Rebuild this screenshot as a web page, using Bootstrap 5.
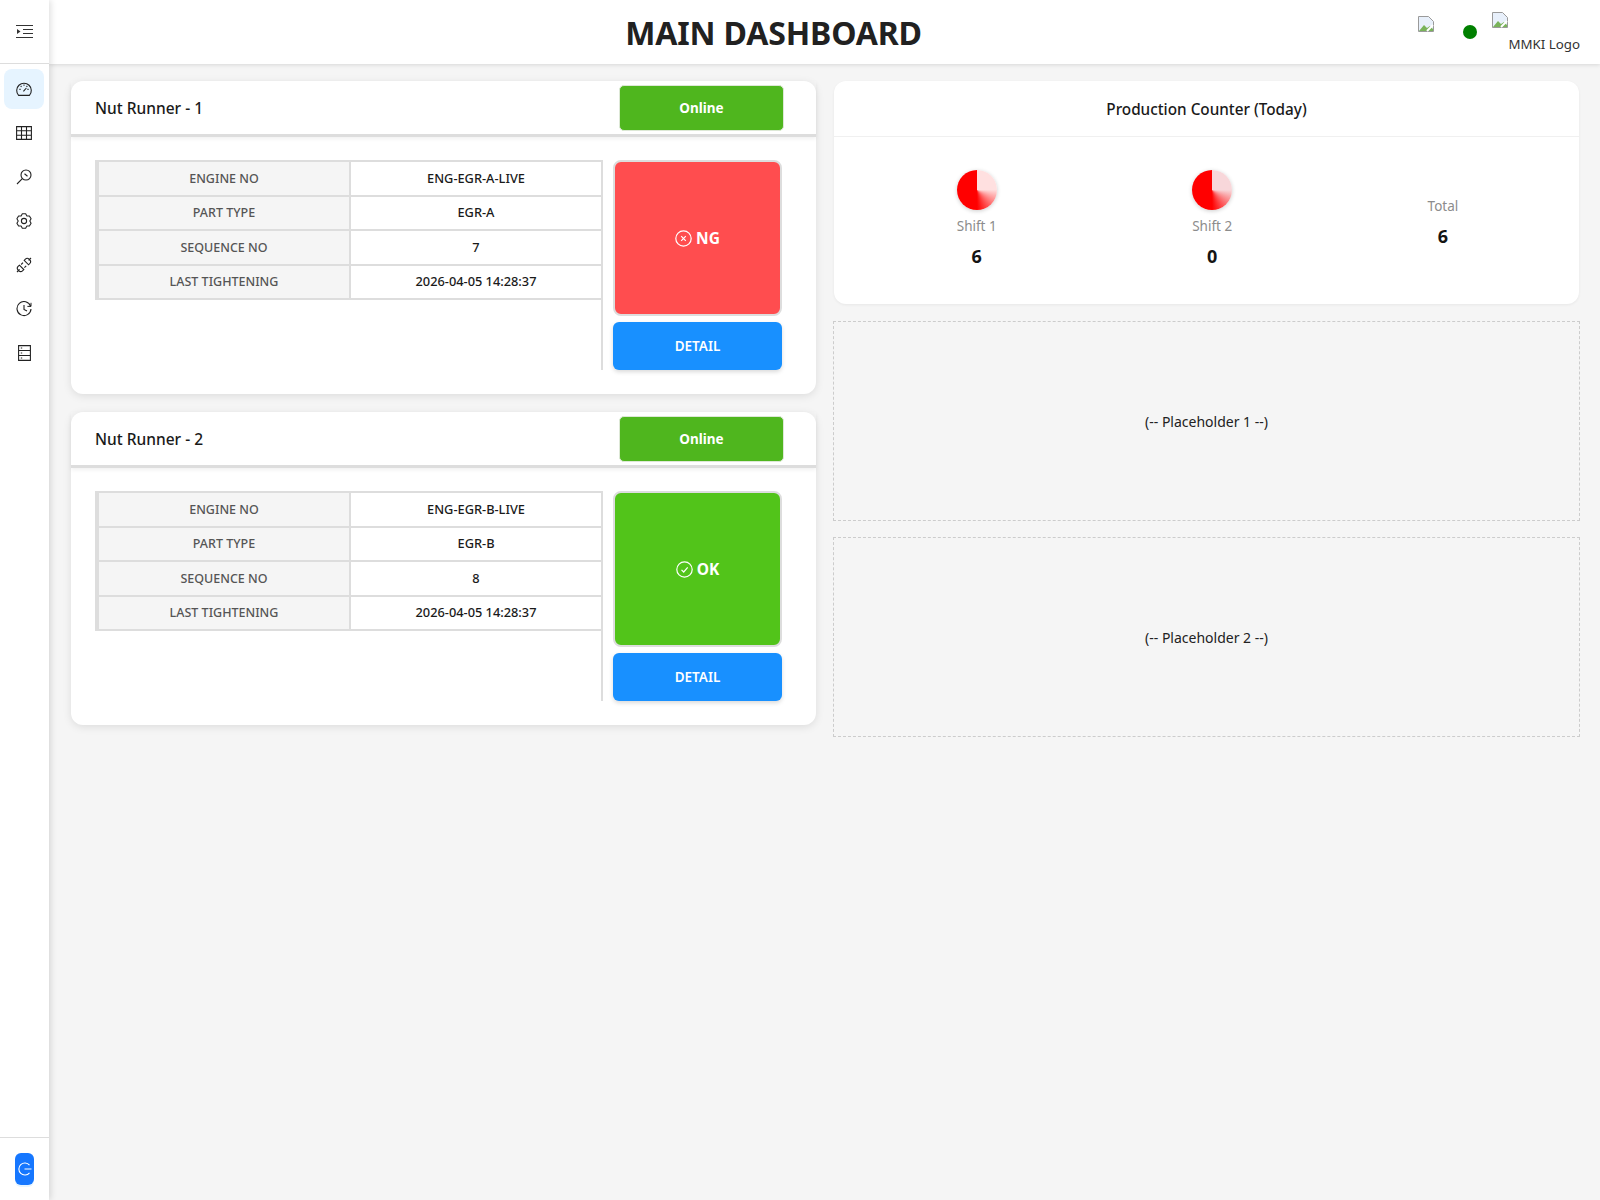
<!DOCTYPE html>
<html lang="en">

<head>
    <meta charset="UTF-8">
    <meta name="viewport" content="width=device-width, initial-scale=1.0">
    <title>Main Dashboard</title>
    <link rel="stylesheet" href="https://cdn.jsdelivr.net/npm/bootstrap@5.3.2/dist/css/bootstrap.min.css">
    <script src="https://cdn.jsdelivr.net/npm/bootstrap@5.3.2/dist/js/bootstrap.bundle.min.js"></script>
    <style>
        body { background: #f5f5f5; font-family: "Noto Sans", "Open Sans", sans-serif; color: #212121; }
        .app-shell { min-height: 1200px; }

        /* sidebar */
        .side-bar { width: 49px; min-height: 1200px; background: #fff; box-shadow: 2px 0 6px rgba(0, 0, 0, .12); z-index: 3; }
        .side-top { height: 64px; border-bottom: 1px solid #ddd; }
        .side-list { padding-top: 3px; padding-right: 1px; }
        .side-item { width: 40px; height: 40px; margin: 2px 0; border-radius: 8px; color: #333; }
        .side-item.on { background: #e6f4ff; }
        .side-foot { height: 63px; border-top: 1px solid #ddd; }
        .logout-btn { width: 19px; height: 32px; border-radius: 6px; background: #1677ff; box-shadow: 0 2px 0 rgba(5, 145, 255, .1); }

        /* header */
        .top-bar { height: 64px; background: #fff; box-shadow: 0 1px 4px rgba(0, 0, 0, .12); padding-right: 20px; z-index: 2; }
        .page-title { font-size: 32px; font-weight: 700; letter-spacing: -.15px; margin: 0; flex-grow: 1; text-align: center; padding: 3px 0 0 80px; color: #212121; }
        .top-right { width: 162px; height: 64px; }
        .status-dot { width: 14px; height: 14px; border-radius: 50%; background: #008000; margin-top: 25px; margin-left: auto; }
        .logo-wrap { margin-left: 15px; margin-top: 12px; }
        .logo-alt { font-size: 13.3px; color: #333; line-height: 16px; margin-top: 8px; padding-left: 16px; white-space: nowrap; }

        /* panels */
        .dash-grid { display: grid; grid-template-columns: 745px 745px; column-gap: 18px; padding: 17px 20px 0 22px; }
        .nr-card { height: 313px; background: #fff; border: 0; border-radius: 12px; box-shadow: 0 2px 8px rgba(0, 0, 0, .1); margin-bottom: 18px; }
        .nr-head { height: 56px; border-bottom: 3px solid #ddd; box-shadow: 0 2px 4px rgba(0, 0, 0, .06); padding: 0 32px 0 24px; }
        .nr-name { font-size: 15.5px; font-weight: 500; color: #1a1a1a; padding-top: 2px; }
        .online-tag { width: 165px; height: 46px; padding-top: 1px; border-radius: 5px; background: #4fb61e; color: #fff; font-size: 13.5px; font-weight: 700; border: 1px solid #dde8d6; }
        .nr-body { padding: 23px 32px 0 24px; }
        .info-side { width: 508px; height: 210px; border-right: 2px solid #ddd; }
        .info-table { width: 506px; margin: 0; border-collapse: collapse; table-layout: fixed; font-size: 12.5px; }
        .info-table th, .info-table td { height: 34.5px; padding: 0; text-align: center; vertical-align: middle; border: 2px solid #ddd; }
        .info-table th { width: 253px; padding-top: 2px; background: #f5f5f5; color: #555; font-weight: 500; border-left-width: 4px; }
        .info-table td { background: #fff; color: #1a1a1a; font-weight: 500; font-size: 12.8px; border-right: 0; }
        .result-side { width: 169px; margin-left: 10px; }
        .result-box { width: 169px; height: 156px; margin: 0 0 6px; padding-top: 1px; border: 2px solid #ddd; border-radius: 8px; color: #fff; font-size: 15.5px; font-weight: 700; }
        .result-box.ng { background: #ff4d4f; }
        .result-box.ok { background: #52c41a; }
        .detail-btn { width: 169px; height: 48px; background: #1890ff; border: 0; border-radius: 6px; color: #fff; font-size: 13.5px; font-weight: 600; box-shadow: 0 2px 4px rgba(0, 0, 0, .15); }
        .detail-btn:hover { background: #1890ff; color: #fff; }

        .count-card { height: 223px; background: #fff; border: 0; border-radius: 12px; box-shadow: 0 1px 3px rgba(0, 0, 0, .06); margin-bottom: 18px; }
        .count-head { height: 56px; padding-top: 2px; border-bottom: 1px solid #f0f0f0; font-size: 15.3px; font-weight: 500; color: #1a1a1a; }
        .count-body { padding: 2px 23px 0 25px; height: 167px; }
        .shift-block { padding-bottom: 6px; }
        .pie-chart { width: 40px; height: 40px; border-radius: 50%; margin: 0 auto 6px; box-shadow: 0 1px 4px rgba(0, 0, 0, .2); }
        .pie-one { background: conic-gradient(#ffe0e0 0 90deg, #ffdcdc 90deg, #ff0000 180deg, #ff0000 360deg); }
        .pie-two { background: conic-gradient(#f8d7da 0 90deg, #f8d7da 90deg, #ff0000 180deg, #ff0000 360deg); }
        .count-label { font-size: 13.5px; line-height: 20px; color: #8c8c8c; }
        .count-value { font-size: 18px; line-height: 24px; font-weight: 700; margin-top: 8px; color: #141414; }
        .slot-box { height: 200px; border: 1px dashed #ccc; font-size: 14px; color: #222; margin: -1px -1px 17px; }
    </style>
</head>

<body>
    <div class="app-shell d-flex">

        <!-- Sidebar -->
        <aside class="side-bar d-flex flex-column flex-shrink-0">
            <div class="side-top d-flex align-items-center justify-content-center">
                <svg width="17" height="15" viewBox="0 0 17 15" fill="none" stroke="#333" stroke-width="1.2"><path d="M0 1.5h17M7 5.5h10M7 9.5h10M0 13.5h17"/><path d="M1 5l3.5 2.5L1 10z" fill="#333" stroke="none"/></svg>
            </div>
            <div class="side-list d-flex flex-column align-items-center">
                <div class="side-item on d-flex align-items-center justify-content-center">
                    <svg width="16" height="16" viewBox="0 0 16 16" fill="none" stroke="#222" stroke-width="1.1"><path d="M2.6 14.4A7.3 7.3 0 1 1 13.4 14.4z"/><path d="M8 3.6v1.2M3.4 8.4h1.2M11.4 8.4h1.2M4.7 5l.8.8M11.3 5l-.8.8M7.4 10.4l3-3.4"/></svg>
                </div>
                <div class="side-item d-flex align-items-center justify-content-center">
                    <svg width="16" height="14" viewBox="0 0 16 14" fill="none" stroke="#222" stroke-width="1.1"><path d="M.6.6h14.8v12.8H.6zM.6 4.8h14.8M.6 9.2h14.8M5.5.6v12.8M10.5.6v12.8"/></svg>
                </div>
                <div class="side-item d-flex align-items-center justify-content-center">
                    <svg width="16" height="16" viewBox="0 0 16 16" fill="none" stroke="#222" stroke-width="1.1"><circle cx="10" cy="6" r="5"/><path d="M6.3 9.7L1 15M8.5 4.8l3 2.4"/></svg>
                </div>
                <div class="side-item d-flex align-items-center justify-content-center">
                    <svg width="16" height="16" viewBox="0 0 16 16" fill="none" stroke="#222" stroke-width="1.1" stroke-linejoin="round"><circle cx="8" cy="8" r="2.6"/><path d="M6.34.79H9.66L10.9 2.98 13.41 2.95 15.08 5.84 13.8 8 15.08 10.16 13.41 13.05 10.9 13.02 9.66 15.21H6.34L5.1 13.02 2.59 13.05.92 10.16 2.2 8 .92 5.84 2.59 2.95 5.1 2.98z"/></svg>
                </div>
                <div class="side-item d-flex align-items-center justify-content-center">
                    <svg width="16" height="16" viewBox="0 0 16 16" fill="none" stroke="#222" stroke-width="1.1"><path d="M1 15l2.6-2.6M15 1l-2.4 2.4M3.4 8.2l4.4 4.4-1.3 1.2a2.6 2.6 0 0 1-3.6 0l-.8-.8a2.6 2.6 0 0 1 0-3.6zM8.2 3.4l4.4 4.4 1.2-1.3a2.6 2.6 0 0 0 0-3.6l-.8-.8a2.6 2.6 0 0 0-3.6 0zM5.2 7.5L7 5.7M8.4 10.7l1.8-1.8"/></svg>
                </div>
                <div class="side-item d-flex align-items-center justify-content-center">
                    <svg width="16" height="16" viewBox="0 0 16 16" fill="none" stroke="#222" stroke-width="1.1"><path d="M14.6 5.2A7 7 0 1 0 15 8M8 4v4.4l3 1.6"/><path d="M15 1.8v3.6h-3.6" stroke-width="1"/></svg>
                </div>
                <div class="side-item d-flex align-items-center justify-content-center">
                    <svg width="13" height="16" viewBox="0 0 13 16" fill="none" stroke="#222" stroke-width="1.1"><path d="M.6.6h11.8v14.8H.6zM.6 5.5h11.8M.6 10.5h11.8M2.8 3h1.4M2.8 8h1.4M2.8 13h1.4"/></svg>
                </div>
            </div>
            <div class="side-foot mt-auto d-flex align-items-center justify-content-center">
                <div class="logout-btn d-flex align-items-center justify-content-center">
                    <svg width="14" height="14" viewBox="0 0 14 14" fill="none" stroke="#fff" stroke-width="1.1"><path d="M11.5 3.2a6 6 0 1 0 0 7.6M6.5 7h7"/></svg>
                </div>
            </div>
        </aside>

        <div class="flex-grow-1">
            <!-- Header -->
            <header class="top-bar d-flex align-items-center position-relative">
                <h1 class="page-title">MAIN DASHBOARD</h1>
                <div class="top-right d-flex flex-shrink-0">
                    <svg class="mt-3" width="16" height="16" viewBox="0 0 16 16"><path d="M.5.5h10l5 5v10H.5z" fill="#e8f0fb" stroke="#9a9a9a"/><path d="M1 15l5-6 3 3 3-2 3 3v2z" fill="#79b35a"/><path d="M9 15l6-6" stroke="#fff" stroke-width="2"/></svg>
                    <div class="status-dot"></div>
                    <div class="logo-wrap">
                        <svg class="d-block" width="16" height="16" viewBox="0 0 16 16"><path d="M.5.5h10l5 5v10H.5z" fill="#e8f0fb" stroke="#9a9a9a"/><path d="M1 15l5-6 3 3 3-2 3 3v2z" fill="#79b35a"/><path d="M9 15l6-6" stroke="#fff" stroke-width="2"/></svg>
                        <div class="logo-alt">MMKI Logo</div>
                    </div>
                </div>
            </header>

            <main class="dash-grid">
                <section>
                    <div class="card nr-card">
                        <div class="nr-head d-flex align-items-center justify-content-between">
                            <span class="nr-name">Nut Runner - 1</span>
                            <span class="online-tag d-flex align-items-center justify-content-center">Online</span>
                        </div>
                        <div class="nr-body d-flex">
                            <div class="info-side">
                                <table class="info-table">
                                    <tr><th>ENGINE NO</th><td>ENG-EGR-A-LIVE</td></tr>
                                    <tr><th>PART TYPE</th><td>EGR-A</td></tr>
                                    <tr><th>SEQUENCE NO</th><td>7</td></tr>
                                    <tr><th>LAST TIGHTENING</th><td>2026-04-05 14:28:37</td></tr>
                                </table>
                            </div>
                            <div class="result-side">
                                <div class="result-box ng d-flex align-items-center justify-content-center gap-1">
                                    <svg width="17" height="17" viewBox="0 0 17 17" fill="none" stroke="#fff" stroke-width="1.2"><circle cx="8.5" cy="8.5" r="7.7"/><path d="M6.2 6.2l4.6 4.6M10.8 6.2l-4.6 4.6"/></svg>
                                    NG
                                </div>
                                <button type="button" class="btn detail-btn p-0">DETAIL</button>
                            </div>
                        </div>
                    </div>

                    <div class="card nr-card">
                        <div class="nr-head d-flex align-items-center justify-content-between">
                            <span class="nr-name">Nut Runner - 2</span>
                            <span class="online-tag d-flex align-items-center justify-content-center">Online</span>
                        </div>
                        <div class="nr-body d-flex">
                            <div class="info-side">
                                <table class="info-table">
                                    <tr><th>ENGINE NO</th><td>ENG-EGR-B-LIVE</td></tr>
                                    <tr><th>PART TYPE</th><td>EGR-B</td></tr>
                                    <tr><th>SEQUENCE NO</th><td>8</td></tr>
                                    <tr><th>LAST TIGHTENING</th><td>2026-04-05 14:28:37</td></tr>
                                </table>
                            </div>
                            <div class="result-side">
                                <div class="result-box ok d-flex align-items-center justify-content-center gap-1">
                                    <svg width="17" height="17" viewBox="0 0 17 17" fill="none" stroke="#fff" stroke-width="1.2"><circle cx="8.5" cy="8.5" r="7.7"/><path d="M5.5 8.8l2.2 2.2 4-4.6"/></svg>
                                    OK
                                </div>
                                <button type="button" class="btn detail-btn p-0">DETAIL</button>
                            </div>
                        </div>
                    </div>
                </section>

                <section>
                    <div class="card count-card">
                        <div class="count-head d-flex align-items-center justify-content-center">Production Counter (Today)</div>
                        <div class="count-body d-flex align-items-center justify-content-around text-center">
                            <div class="shift-block">
                                <div class="pie-chart pie-one"></div>
                                <div class="count-label">Shift 1</div>
                                <div class="count-value">6</div>
                            </div>
                            <div class="shift-block">
                                <div class="pie-chart pie-two"></div>
                                <div class="count-label">Shift 2</div>
                                <div class="count-value">0</div>
                            </div>
                            <div>
                                <div class="count-label">Total</div>
                                <div class="count-value">6</div>
                            </div>
                        </div>
                    </div>
                    <div class="slot-box d-flex align-items-center justify-content-center">(-- Placeholder 1 --)</div>
                    <div class="slot-box d-flex align-items-center justify-content-center">(-- Placeholder 2 --)</div>
                </section>
            </main>
        </div>
    </div>
</body>

</html>
